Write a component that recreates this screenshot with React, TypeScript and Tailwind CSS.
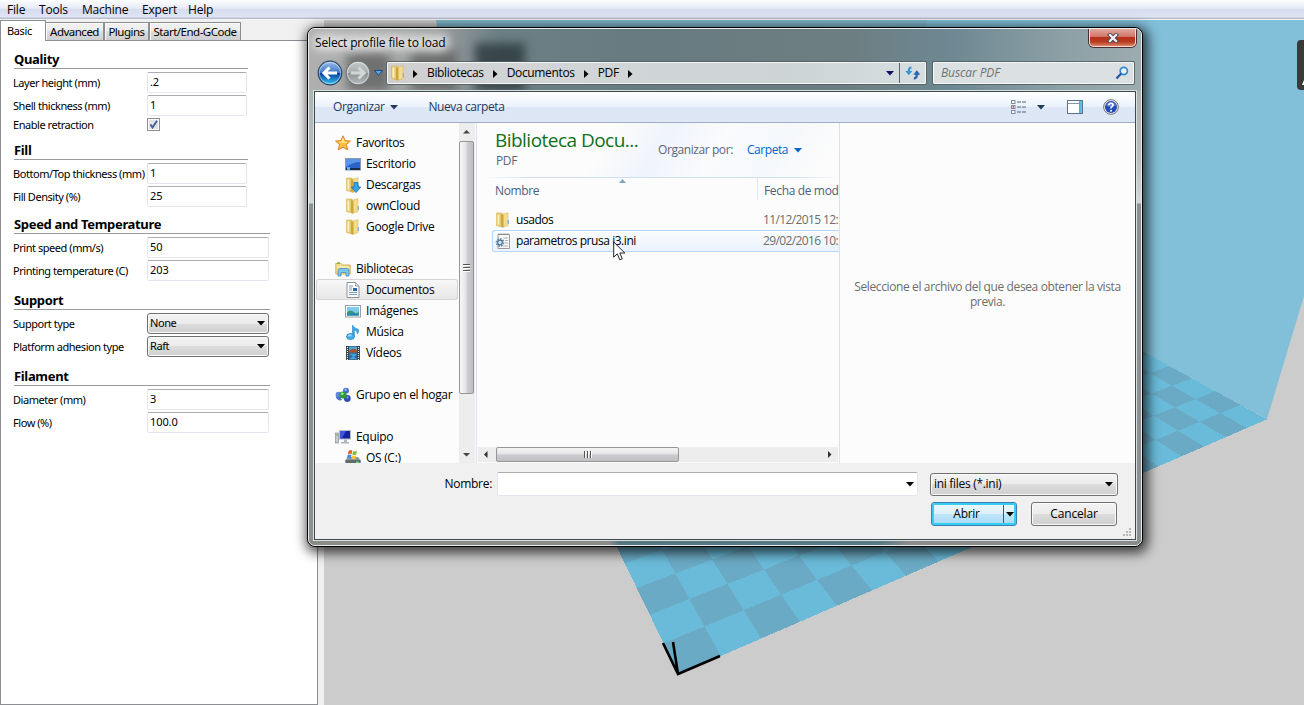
import React from "react";

const SEGOE = "font-['Open_Sans','Noto_Sans',sans-serif]";
const TAHOMA = "font-['Noto_Sans','Open_Sans',sans-serif]";

/* ---------- 3D viewport ---------- */

// Perspective projection of bed coordinates (in 10 mm cells) to the viewport.
function project(u: number, v: number): string {
  const w = 1 + 0.02352 * u + 0.0412 * v;
  const x = (678.6 + 59.22 * u + 12.3 * v) / w;
  const y = (674.3 - 2.89 * u - 4.5 * v) / w;
  return `${(x - 324).toFixed(1)},${(y - 20).toFixed(1)}`;
}

function Viewport() {
  const cells: React.ReactNode[] = [];
  for (let u = 0; u < 20; u++)
    for (let v = 0; v < 20; v++)
      if ((u + v) % 2 === 0)
        cells.push(
          <polygon
            key={`${u}-${v}`}
            points={[project(u, v), project(u + 1, v), project(u + 1, v + 1), project(u, v + 1)].join(" ")}
          />
        );
  return (
    <svg width="980" height="685" viewBox="0 0 980 685" className="block bg-[#cccccc]">
      <polygon points="112,0 603,0 603,250 150,250" fill="#7eb5c9" />
      <polygon points="603,0 980,0 980,276 943,399 800,322 603,250" fill="#82bfd8" />
      <g shapeRendering="crispEdges">
        <polygon points={[project(0, 0), project(20, 0), project(20, 20), project(0, 20)].join(" ")} fill="#6abad9" />
        <g fill="#6aaac4">{cells}</g>
      </g>
      <path d="M339 623L354 654L396 636M349 622L354 654" fill="none" stroke="#000" strokeWidth="2.6" />
      <rect x="973" y="20" width="20" height="50" rx="4" fill="#3a3a3a" />
      <path d="M978 65L980 60V65Z" fill="#fff" />
    </svg>
  );
}

/* ---------- settings panel ---------- */

function Arrow({ className = "" }: { className?: string }) {
  return (
    <svg width="8" height="5" viewBox="0 0 8 5" className={`shrink-0 ${className}`}>
      <path d="M0 0H8L4 4.5Z" fill="currentColor" />
    </svg>
  );
}

function Section({ title, wide, className = "", children }: { title: string; wide?: boolean; className?: string; children: React.ReactNode }) {
  return (
    <section className={className}>
      <h2
        className={`mb-[3px] flex h-[18px] items-center border-b border-[#9a9a9a] pb-px text-[13px] font-bold leading-none tracking-[-0.33px] ${wide ? "w-[256px]" : "w-[234px]"}`}
      >
        {title}
      </h2>
      {children}
    </section>
  );
}

function Field({ label, value, wide, select }: { label: string; value: string; wide?: boolean; select?: boolean }) {
  return (
    <div className="mb-[2px] flex h-[21px] items-center">
      <span className="ml-[-1px] w-[134px] shrink-0 whitespace-nowrap pt-px text-[11px] tracking-[-0.45px]">{label}</span>
      {select ? (
        <span className="flex h-[21px] w-[122px] items-center justify-between rounded-[3px] border border-[#707070] bg-[linear-gradient(#f3f3f3_0%,#ebebeb_50%,#dddddd_50%,#cfcfcf_100%)] px-[3px] pl-[2px] text-[11px] tracking-[-0.4px] shadow-[inset_0_0_0_1px_#fafafa]">
          {value}
          <Arrow />
        </span>
      ) : (
        <span
          className={`flex h-[21px] items-center rounded-[2px] border border-[#e3e6ee] border-t-[#abadb3] bg-white pb-px pl-[2px] text-[11px] tracking-[-0.1px] ${wide ? "w-[122px]" : "w-[100px]"}`}
        >
          {value}
        </span>
      )}
    </div>
  );
}

function Tab({ label, width }: { label: string; width: string }) {
  return (
    <div
      className={`flex h-[18px] items-center justify-center whitespace-nowrap border border-b-0 border-[#8c8e94] bg-[linear-gradient(#f2f2f2_0%,#ebebeb_50%,#dddddd_50%,#cfcfcf_100%)] text-[11.5px] tracking-[-0.5px] shadow-[inset_1px_1px_0_#fafafa] ${width}`}
    >
      {label}
    </div>
  );
}

function Settings() {
  return (
    <aside className={`flex h-[685px] w-[318px] shrink-0 flex-col bg-[#f0f0f0] text-black ${TAHOMA}`}>
      <div className="flex h-[20px] items-end">
        <div className="z-10 flex h-[21px] w-[46px] shrink-0 items-center self-start border border-b-0 border-[#8c8e94] bg-white pl-[6px] text-[11px] tracking-[-0.35px]">
          Basic
        </div>
        <Tab label="Advanced" width="w-[58px] border-l-0" />
        <Tab label="Plugins" width="w-[45px]" />
        <Tab label="Start/End-GCode" width="w-[92px]" />
      </div>
      <div className="flex-1 border border-[#8c8e94] bg-white pl-[13px] pt-[10px]">
        <Section title="Quality">
          <Field label="Layer height (mm)" value=".2" />
          <Field label="Shell thickness (mm)" value="1" />
          <div className="flex h-[13px] items-center text-[11px] tracking-[-0.45px]">
            <span className="ml-[-1px] w-[134px] pt-px">Enable retraction</span>
            <svg width="13" height="13" viewBox="0 0 13 13">
              <rect x=".5" y=".5" width="12" height="12" fill="#fff" stroke="#8e8f8f" />
              <rect x="2" y="2" width="9" height="9" fill="#dfe2e8" />
              <path d="M3.5 6.5L5.5 9.5L10 2.8" fill="none" stroke="#4b5f97" strokeWidth="2" />
            </svg>
          </div>
        </Section>
        <Section title="Fill" className="mt-[11px]">
          <Field label="Bottom/Top thickness (mm)" value="1" />
          <Field label="Fill Density (%)" value="25" />
        </Section>
        <Section title="Speed and Temperature" wide className="mt-[9px]">
          <Field label="Print speed (mm/s)" value="50" wide />
          <Field label="Printing temperature (C)" value="203" wide />
        </Section>
        <Section title="Support" wide className="mt-[11px]">
          <Field label="Support type" value="None" select />
          <Field label="Platform adhesion type" value="Raft" select />
        </Section>
        <Section title="Filament" wide className="mt-[11px]">
          <Field label="Diameter (mm)" value="3" wide />
          <Field label="Flow (%)" value="100.0" wide />
        </Section>
      </div>
    </aside>
  );
}

/* ---------- icons ---------- */

function Svg({ children, w = 16, h = 16 }: { children: React.ReactNode; w?: number; h?: number }) {
  return (
    <svg width={w} height={h} viewBox={`0 0 ${w} ${h}`} className="shrink-0">
      {children}
    </svg>
  );
}

const folderShape = (
  <>
    <path d="M1.5 1H7V15L1.5 13.5Z" fill="#e6ca6e" stroke="#d3b356" strokeWidth=".6" />
    <path d="M7 2.2L13 .7V13.6L7 15.5Z" fill="#f3dd8c" stroke="#d6b95f" strokeWidth=".6" />
    <path d="M6 2.5H8.5V15.5L6 14.5Z" fill="#cda63d" />
    <path d="M2.5 2.5H4.3V13L2.5 12.5Z" fill="#fbf1bf" />
    <path d="M13.3 8V12" stroke="#6fb5d8" strokeWidth="1.2" />
  </>
);

const FolderIcon = () => <Svg>{folderShape}</Svg>;

const DownloadsIcon = () => (
  <Svg>
    {folderShape}
    <path d="M9 5.5H13V10H15.8L11 15.6L6.3 10H9Z" fill="#35a4e8" stroke="#1c6fb5" strokeWidth=".8" />
  </Svg>
);

const StarIcon = () => (
  <Svg>
    <path d="M8 .8L10.1 5.6L15.4 6.1L11.4 9.6L12.7 14.9L8 12.1L3.3 14.9L4.6 9.6L.6 6.1L5.9 5.6Z" fill="#fbbf3c" stroke="#e07f2a" strokeWidth="1" />
    <path d="M8 2.6L9.4 6.4L13 7L9 8L5 7.6L3.2 6.9L6.5 6.4Z" fill="#ffe68a" />
  </Svg>
);

const DesktopIcon = () => (
  <Svg>
    <rect x=".5" y="2.5" width="15" height="11.5" fill="#2a62c9" stroke="#8a98a8" />
    <path d="M1 3H15V6Q8 6 1 11Z" fill="#5a95ea" />
    <rect x="1" y="12" width="14" height="2" fill="#1a2b4a" />
    <rect x="2" y="11.2" width="3" height="2.6" fill="#5bc4f0" />
  </Svg>
);

const LibraryIcon = () => (
  <Svg>
    <path d="M.8 2.5H6L7.5 4H15.2V13H.8Z" fill="#f2dd8d" stroke="#cdae55" strokeWidth=".9" />
    <path d="M2 2H5" stroke="#62b54c" strokeWidth="1.4" />
    <path d="M2.5 6H13.5" stroke="#fbf3cb" strokeWidth="1.2" />
    <path d="M3 15V10Q3 7.5 5 7.5H12Q14 7.5 14 10V15H11V11.5H6V15Z" fill="#7cc6ee" stroke="#4191c4" strokeWidth=".8" />
  </Svg>
);

const DocIcon = () => (
  <Svg>
    <path d="M2 .5H10.5L14 4V15.5H2Z" fill="#fff" stroke="#8b9199" />
    <path d="M10.5 .5V4H14" fill="#dfe6ee" stroke="#8b9199" strokeWidth=".8" />
    <path d="M4 4H8M4 6H7M4 8H7M4 10.5H12M4 12.5H12" stroke="#6f8fb8" strokeWidth=".9" />
    <rect x="8" y="6" width="4" height="3" fill="#2f66a6" />
  </Svg>
);

const PictureIcon = () => (
  <Svg>
    <rect x=".5" y="2.5" width="15" height="11.5" fill="#fff" stroke="#9a9fa5" />
    <rect x="2" y="4" width="12" height="8.5" fill="#7ecbf2" />
    <path d="M2 9Q6 6 9 9T14 8V12.5H2Z" fill="#3c9a6a" />
    <path d="M2 11Q8 9 14 11V12.5H2Z" fill="#2a86bb" />
  </Svg>
);

const MusicIcon = () => (
  <Svg>
    <path d="M7.5 12V1Q9 4 13.5 5.5Q14 8 12.5 10Q12.5 6.5 9.3 6V12.5" fill="#3ba5e2" stroke="#2384c4" strokeWidth=".6" />
    <ellipse cx="5.5" cy="12.5" rx="4" ry="3" fill="#43aeea" stroke="#1e7dbd" strokeWidth=".7" />
    <ellipse cx="4.8" cy="11.5" rx="1.8" ry="1" fill="#a9ddfa" />
  </Svg>
);

const VideoIcon = () => (
  <Svg>
    <rect x="1" y="1" width="14" height="14" fill="#2e4148" />
    <rect x="4" y="1.5" width="8" height="6" fill="#4ea6dd" />
    <rect x="4" y="8.5" width="8" height="6" fill="#46a3e0" />
    <path d="M4 6Q7 2 12 5V7.5H4Z" fill="#a8552f" />
    <path d="M4 9L8 11L4 14.5ZM12 9L9 12L12 14Z" fill="#2c6b9b" />
    <path d="M2.5 2V15M13.5 2V15" stroke="#f2f2f2" strokeWidth="1.2" strokeDasharray="1 1" />
  </Svg>
);

const HomegroupIcon = () => (
  <Svg>
    <circle cx="3.8" cy="8" r="3.2" fill="#5f87dd" />
    <circle cx="11" cy="3.8" r="3" fill="#4b74d0" />
    <circle cx="12.3" cy="11.5" r="3.4" fill="#2f4fb5" />
    <path d="M.8 10Q3 14.5 7 13L5 10Z" fill="#4a6fd0" />
    <circle cx="8" cy="8" r="3.6" fill="#2f9a38" />
    <circle cx="7.2" cy="6.8" r="1.4" fill="#a5e39a" />
    <circle cx="10.6" cy="2.8" r="1" fill="#b7c9f5" />
    <circle cx="12.5" cy="10.4" r="1" fill="#8fa9ec" />
  </Svg>
);

const ComputerIcon = () => (
  <Svg>
    <rect x=".5" y="4" width="3" height="10" fill="#c6ccd2" stroke="#8a9299" strokeWidth=".7" />
    <path d="M1 6H3" stroke="#55b855" strokeWidth="1" />
    <rect x="4.5" y="1.5" width="11" height="8.5" fill="#1420a6" stroke="#b6bec6" />
    <path d="M5 2H11L7 9H5Z" fill="#4157da" />
    <path d="M9 10.5H12V13H14V14.5H6V13H9Z" fill="#aeb6bd" />
  </Svg>
);

const DriveIcon = () => (
  <Svg>
    <path d="M.5 10L3 7H13L15.5 10V15H.5Z" fill="#8d979e" />
    <rect x=".5" y="10" width="15" height="5" fill="#5d6a70" />
    <rect x="11" y="11.5" width="3" height="1.6" fill="#58dd6a" />
    <path d="M3.5 .9Q5.5 -.6 7.3 .6L6.6 4.2Q4.8 3.2 2.8 4.4Z" fill="#e8632c" />
    <path d="M8 .9Q10 2 12 .8L11.3 4.4Q9.3 5.4 7.3 4.4Z" fill="#7fbf3f" />
    <path d="M2.6 5.1Q4.6 4 6.5 5L5.8 8.4Q4 7.4 2 8.6Z" fill="#3b8fe0" />
    <path d="M7.2 5.2Q9 6.3 11.1 5.2L10.4 8.7Q8.4 9.8 6.5 8.6Z" fill="#f7c52e" />
  </Svg>
);

const IniIcon = () => (
  <Svg>
    <path d="M3 1.5H14.5V15.5H3Z" fill="#f8f8f8" stroke="#9b9b9b" />
    <path d="M3.5 1.2H14" stroke="#777" strokeWidth="1.4" strokeDasharray="1 1" />
    <path d="M8.5 5H13M10 7.5H13M10 10H13M8 13H13" stroke="#a5a5a5" strokeWidth=".9" />
    <circle cx="5" cy="9.5" r="3.4" fill="none" stroke="#6e8fac" strokeWidth="2" strokeDasharray="1.6 1" />
    <circle cx="5" cy="9.5" r="2.3" fill="#d9e6f0" stroke="#4d7599" strokeWidth="1.2" />
  </Svg>
);

/* ---------- dialog ---------- */

function NavOrb({ active }: { active?: boolean }) {
  const id = active ? "orbOn" : "orbOff";
  return (
    <svg width="26" height="26" viewBox="0 0 26 26" className="shrink-0">
      <defs>
        <linearGradient id={id} x1="0" y1="0" x2="0" y2="1">
          <stop offset="0" stopColor={active ? "#9cc0ea" : "#c4c8c9"} />
          <stop offset=".48" stopColor={active ? "#3c78cb" : "#a9aeaf"} />
          <stop offset=".52" stopColor={active ? "#0a3f9d" : "#8e9495"} />
          <stop offset="1" stopColor={active ? "#35c8f5" : "#b5babb"} />
        </linearGradient>
      </defs>
      <circle cx="13" cy="13" r="11.8" fill={`url(#${id})`} stroke={active ? "#2b4766" : "#74797b"} strokeWidth="1.2" />
      <circle cx="13" cy="13" r="10.7" fill="none" stroke="#fff" strokeOpacity=".5" />
      <path
        d={active ? "M20 13H7.5M12.5 7.5L7 13L12.5 18.5" : "M6 13H18.5M13.5 7.5L19 13L13.5 18.5"}
        fill="none"
        stroke={active ? "#fff" : "#d3d6d7"}
        strokeWidth="3"
      />
    </svg>
  );
}

function Crumb({ label }: { label?: string }) {
  return (
    <>
      {label && <span>{label}</span>}
      <svg width="5" height="8" viewBox="0 0 5 8" className="mt-px shrink-0">
        <path d="M0 0L4.5 4L0 8Z" fill="#000" />
      </svg>
    </>
  );
}

function TitleBar() {
  return (
    <div className="flex h-[33px] items-start justify-between pl-[2px]">
      <span className="pt-[5px] text-[12px] leading-[17px] tracking-[-0.15px] text-black [text-shadow:0_0_8px_#fff,0_0_10px_#fff,0_0_12px_#ffffffcc]">
        Select profile file to load
      </span>
      <button className="mr-px flex h-[18px] w-[47px] items-center justify-center rounded-b-[5px] border border-t-0 border-[#f0dcd8] bg-[linear-gradient(#e2a99e_0%,#cf7566_45%,#b8311a_50%,#b83a20_75%,#dd8264_100%)] shadow-[0_0_0_1px_#4c3030]">
        <svg width="12" height="10" viewBox="0 0 12 10">
          <path d="M3 2L9 8M9 2L3 8" stroke="#54495c" strokeWidth="4.2" strokeLinecap="square" />
          <path d="M3 2L9 8M9 2L3 8" stroke="#f4f4f4" strokeWidth="2.2" strokeLinecap="square" />
        </svg>
      </button>
    </div>
  );
}

function NavBar() {
  return (
    <div className="flex h-[22px] items-center pl-[4px]">
      <NavOrb active />
      <span className="w-[2px]" />
      <NavOrb />
      <svg width="9" height="6" viewBox="0 0 9 6" className="ml-[3px] mr-[4px] shrink-0">
        <path d="M.5 .5H8.5L4.5 5.3Z" fill="#58a8e6" stroke="#173f78" strokeWidth=".9" />
      </svg>
      <div className="flex h-[22px] w-[539px] shrink-0 items-center rounded-[1px] border border-[#f4f6f6] bg-[linear-gradient(90deg,#d0cfd0_0%,#d2d5d6_30%,#cdd4d6_75%,#d6dedf_100%)] text-[12px] tracking-[-0.35px] text-black shadow-[0_0_0_1px_#4f5b5ecc]">
        <div className="flex flex-1 items-center gap-[9px] pl-[2px]">
          <span className="mr-[-2px] flex">
            <FolderIcon />
          </span>
          <Crumb />
          <Crumb label="Bibliotecas" />
          <Crumb label="Documentos" />
          <Crumb label="PDF" />
        </div>
        <Arrow className="mr-[5px] text-[#0b1060]" />
        <div className="flex h-full w-[26px] items-center justify-center border-l border-[#5b676b]">
          <svg width="16" height="14" viewBox="0 0 16 14">
            <path d="M6.5 1.5Q3.8 1.5 3.8 5V6" fill="none" stroke="#3397dc" strokeWidth="2.2" />
            <path d="M.3 5H7.3L3.8 9.3Z" fill="#3397dc" />
            <path d="M8.8 12.5Q11.8 12.5 11.8 9V8" fill="none" stroke="#2a62b5" strokeWidth="2.2" />
            <path d="M8.3 8.7H15.3L11.8 4.3Z" fill="#2a62b5" />
          </svg>
        </div>
      </div>
      <div className="ml-[7px] flex h-[22px] w-[201px] items-center justify-between rounded-[1px] border border-[#f4f6f6] bg-[#dbe1e2] pl-[7px] pr-[4px] text-[12px] italic tracking-[-0.1px] text-[#6d7375] shadow-[0_0_0_1px_#4f5b5ecc]">
        Buscar PDF
        <svg width="14" height="14" viewBox="0 0 14 14">
          <circle cx="8.8" cy="5" r="3.6" fill="#e8f3fa" stroke="#3389cd" strokeWidth="1.7" />
          <path d="M6.2 7.6L1.5 12.5" stroke="#23549b" strokeWidth="2.2" />
        </svg>
      </div>
    </div>
  );
}

function Toolbar() {
  return (
    <div className="flex h-[31px] shrink-0 items-center border-b border-[#a0afc9] bg-[linear-gradient(#ffffff_0%,#eaf1fb_50%,#dce6f4_51%,#dde7f6_100%)] pl-[18px] pr-[16px] text-[12px] tracking-[-0.4px] text-[#1e395b]">
      <span>Organizar</span>
      <Arrow className="ml-[6px]" />
      <span className="ml-[30px] flex-1">Nueva carpeta</span>
      <svg width="16" height="14" viewBox="0 0 16 14">
        {[0, 5, 10].map((y) => (
          <g key={y}>
            <rect x=".5" y={y + 0.5} width="3.5" height="3" fill="#fff" stroke="#7e8b9c" />
            <path d={`M6 ${y + 2}H10M11 ${y + 2}H15`} stroke="#52647a" strokeWidth="1" />
          </g>
        ))}
        <rect x="1.5" y="6.3" width="1.5" height="1.4" fill="#c33" />
      </svg>
      <Arrow className="ml-[10px] mr-[22px]" />
      <svg width="16" height="14" viewBox="0 0 16 14">
        <rect x=".5" y=".5" width="15" height="13" fill="#fff" stroke="#5d728c" />
        <path d="M1 3.5H12" stroke="#8595a8" />
        <rect x="13" y="1" width="2" height="12" fill="#59c4e4" />
        <path d="M12.6 1V13" stroke="#5d728c" strokeWidth=".8" />
      </svg>
      <svg width="16" height="16" viewBox="0 0 16 16" className="ml-[20px]">
        <circle cx="8" cy="8" r="7.4" fill="#e6e6ea" stroke="#7a7a80" strokeWidth="1" />
        <circle cx="8" cy="8" r="6" fill="#2449b8" />
        <path d="M3 6.5A5.3 5.3 0 0 1 13 6.5Q8 9 3 6.5Z" fill="#5f82d8" />
        <path d="M6 6.2Q6 4.2 8 4.2T10 6Q10 7 8.8 7.7Q8 8.2 8 9.4" fill="none" stroke="#fff" strokeWidth="1.6" />
        <circle cx="8" cy="11.7" r="1" fill="#fff" />
      </svg>
    </div>
  );
}

type NavItem = { label: string; icon: React.ReactNode; root?: boolean; selected?: boolean } | null;

const NAV: NavItem[] = [
  { label: "Favoritos", icon: <StarIcon />, root: true },
  { label: "Escritorio", icon: <DesktopIcon /> },
  { label: "Descargas", icon: <DownloadsIcon /> },
  { label: "ownCloud", icon: <FolderIcon /> },
  { label: "Google Drive", icon: <FolderIcon /> },
  null,
  { label: "Bibliotecas", icon: <LibraryIcon />, root: true },
  { label: "Documentos", icon: <DocIcon />, selected: true },
  { label: "Imágenes", icon: <PictureIcon /> },
  { label: "Música", icon: <MusicIcon /> },
  { label: "Vídeos", icon: <VideoIcon /> },
  null,
  { label: "Grupo en el hogar", icon: <HomegroupIcon />, root: true },
  null,
  { label: "Equipo", icon: <ComputerIcon />, root: true },
  { label: "OS (C:)", icon: <DriveIcon /> },
];

function Sidebar() {
  return (
    <nav className="w-[144px] shrink-0 overflow-hidden pt-[9px] text-[12px] tracking-[-0.3px] text-black">
      {NAV.map((item, i) =>
        item ? (
          <div
            key={i}
            className={`ml-px flex h-[21px] w-[142px] items-center gap-[5px] whitespace-nowrap ${item.root ? "pl-[19px]" : "pl-[29px]"} ${
              item.selected ? "rounded-[3px] bg-[linear-gradient(#f8f8f8,#e6e6e6)] shadow-[inset_0_0_0_1px_#d5d5d5]" : ""
            }`}
          >
            {item.icon}
            <span>{item.label}</span>
          </div>
        ) : (
          <div key={i} className="h-[21px]" />
        )
      )}
    </nav>
  );
}

function VerticalScroll() {
  return (
    <div className="flex w-[16px] shrink-0 flex-col items-start bg-[#ededed]">
      <svg width="16" height="18" viewBox="0 0 16 18" className="shrink-0">
        <path d="M4 10.5H11L7.5 7Z" fill="#444" />
      </svg>
      <div className="flex h-[253px] w-[15px] shrink-0 flex-col items-center justify-center gap-px rounded-[2px] border border-[#979797] bg-[linear-gradient(90deg,#f7f7f7_0%,#e6e6e8_45%,#cfcfd3_55%,#bdbdc2_100%)]">
        <i className="h-[2px] w-[7px] border-b border-white bg-[#555]" />
        <i className="h-[2px] w-[7px] border-b border-white bg-[#555]" />
        <i className="h-[2px] w-[7px] border-b border-white bg-[#555]" />
      </div>
      <span className="flex-1" />
      <svg width="16" height="17" viewBox="0 0 16 17" className="shrink-0">
        <path d="M4 7H11L7.5 10.5Z" fill="#444" />
      </svg>
    </div>
  );
}

function HorizontalScroll() {
  return (
    <div className="mx-px mb-px flex h-[15px] shrink-0 items-center bg-[#ededed]">
      <svg width="18" height="15" viewBox="0 0 18 15" className="shrink-0">
        <path d="M9.5 4V11L6 7.5Z" fill="#333" />
      </svg>
      <div className="flex h-[15px] w-[183px] shrink-0 items-center justify-center gap-px rounded-[2px] border border-[#979797] bg-[linear-gradient(#f5f5f5_0%,#e4e4e6_45%,#cbcbcf_55%,#c0c0c4_100%)]">
        <i className="h-[7px] w-[2px] border-r border-white bg-[#555]" />
        <i className="h-[7px] w-[2px] border-r border-white bg-[#555]" />
        <i className="h-[7px] w-[2px] border-r border-white bg-[#555]" />
      </div>
      <span className="flex-1" />
      <svg width="18" height="15" viewBox="0 0 18 15" className="shrink-0">
        <path d="M8 4V11L11.5 7.5Z" fill="#333" />
      </svg>
    </div>
  );
}

function FileRow({ icon, name, date, hot }: { icon: React.ReactNode; name: string; date: string; hot?: boolean }) {
  return (
    <div
      className={`ml-[15px] flex h-[22px] items-center overflow-hidden whitespace-nowrap text-[12px] tracking-[-0.45px] ${
        hot
          ? "rounded-l-[3px] bg-[linear-gradient(#fbfcfe,#eaf2fc)] shadow-[inset_1px_1px_0_#b8d6fb,inset_0_-1px_0_#b8d6fb]"
          : "mb-[-1px]"
      }`}
    >
      <span className="flex w-[271px] shrink-0 items-center gap-[5px] pl-[3px] text-black">
        {icon}
        <span>{name}</span>
      </span>
      <span className="tracking-[-0.62px] text-[#6d6d6d]">{date}</span>
    </div>
  );
}

function FileList() {
  return (
    <div className="flex w-[364px] shrink-0 flex-col overflow-hidden border-x border-[#d3e3f3] bg-[#fcfcfc]">
      <div className="flex h-[54px] shrink-0 bg-[linear-gradient(120deg,#fcfcfc_0%,#fcfcfc_35%,#f0f4fb_50%,#fafbfd_65%,#f5f8fc_80%,#fcfcfc_95%)]">
        <div className="w-[163px] shrink-0 pl-[18px] pt-[5px]">
          <h1 className="whitespace-nowrap text-[19px] leading-[25px] tracking-[-0.53px] text-[#0f7019]">Biblioteca Docu...</h1>
          <p className="pl-px text-[12px] leading-[15px] tracking-[-0.4px] text-[#5a6779]">PDF</p>
        </div>
        <div className="flex h-[54px] items-center whitespace-nowrap pl-[18px] text-[12px] tracking-[-0.42px] text-[#5a6779]">
          Organizar por:
          <span className="ml-[14px] text-[#0066cc]">Carpeta</span>
          <Arrow className="ml-[6px] text-[#0066cc]" />
        </div>
      </div>
      <div className="ml-[8px] h-px shrink-0 bg-[linear-gradient(90deg,#fcfcfc,#d0dff0_12%,#d0dff0_88%,#fcfcfc)]" />
      <div className="flex h-[31px] shrink-0 pl-[18px] text-[12px] leading-[26px] tracking-[-0.35px] text-[#4c607a]">
        <span className="flex h-[22px] w-[263px] shrink-0 border-r border-[#dfe7f2]">
          <span className="w-[124px]">Nombre</span>
          <svg width="7" height="4" viewBox="0 0 7 4" className="mt-[1px]">
            <path d="M0 4H7L3.5 0Z" fill="#7aa4c4" />
          </svg>
        </span>
        <span className="whitespace-nowrap pl-[6px]">Fecha de mod</span>
      </div>
      <FileRow icon={<FolderIcon />} name="usados" date="11/12/2015 12:" />
      <FileRow icon={<IniIcon />} name="parametros prusa i3.ini" date="29/02/2016 10:" hot />
      <span className="flex-1" />
      <HorizontalScroll />
    </div>
  );
}

function Footer() {
  return (
    <div className="flex flex-1 flex-col bg-[#f0f0f0] pt-[9px] text-[12px] tracking-[-0.3px] text-black">
      <div className="flex h-[24px] items-center">
        <span className="w-[182px] pr-[5px] text-right">Nombre:</span>
        <div className="flex h-[24px] w-[421px] items-center justify-end rounded-[2px] border border-[#e3e6ee] border-t-[#abadb3] bg-white pr-[3px]">
          <Arrow />
        </div>
        <div className="ml-[12px] flex h-[23px] w-[188px] items-center justify-between rounded-[3px] border border-[#707070] bg-[linear-gradient(#f3f3f3_0%,#ebebeb_50%,#dddddd_50%,#cfcfcf_100%)] pl-[3px] pr-[4px] tracking-[-0.3px] shadow-[inset_0_0_0_1px_#fafafa]">
          ini files (*.ini)
          <Arrow />
        </div>
      </div>
      <div className="mt-[6px] flex h-[24px] pl-[616px]">
        <div className="flex h-[24px] w-[86px] rounded-[3px] border border-[#3c7fb1] bg-[linear-gradient(#edf7fd_0%,#dcf0fb_50%,#bfe6fa_50%,#a9dbf5_100%)] shadow-[inset_0_0_0_2px_#35ccf5]">
          <span className="flex w-[71px] items-center justify-center pr-[2px]">Abrir</span>
          <span className="my-[2px] w-px bg-[#555]" />
          <span className="flex flex-1 items-center pl-[2px]">
            <Arrow />
          </span>
        </div>
        <div className="ml-[14px] flex h-[24px] w-[86px] items-center justify-center rounded-[3px] border border-[#707070] bg-[linear-gradient(#f3f3f3_0%,#ebebeb_50%,#dddddd_50%,#cfcfcf_100%)] tracking-[-0.15px] shadow-[inset_0_0_0_1px_#fafafa]">
          Cancelar
        </div>
      </div>
      <div className="flex flex-1 items-end justify-end pb-[2px] pr-[3px]">
        <svg width="9" height="9" viewBox="0 0 9 9" fill="#b8b8b8">
          <path d="M6 0H8V2H6ZM3 3H5V5H3ZM6 3H8V5H6ZM0 6H2V8H0ZM3 6H5V8H3ZM6 6H8V8H6Z" />
        </svg>
      </div>
    </div>
  );
}

function Dialog() {
  return (
    <div
      className={`absolute left-[307px] top-[27px] h-[520px] w-[836px] rounded-[8px] border border-black bg-[#7e8b8e] shadow-[2px_3px_12px_3px_rgba(0,0,0,0.7)] ${SEGOE}`}
    >
      <div className="relative h-[518px] w-[834px] overflow-hidden rounded-[7px] border border-[#e6ecec] bg-[linear-gradient(#a4a9a9_0px,#b9bebf_130px,#d3d7d7_174px,#8b9193_175px,#8b9193_100%)]">
        <div className="absolute inset-x-0 top-0 h-[62px] bg-[linear-gradient(90deg,#b0b0b0_0px,#999b9b_130px,#6c7f85_190px,#687b80_330px,#6d7e82_540px,#6d8892_640px,#8b9fa5_750px,#9dacb0_832px)]" />
        <div className="absolute left-[38px] top-[22px] h-[40px] w-[42px] bg-[#4d4d4d99] blur-[5px]" />
        <div className="absolute left-[102px] top-[22px] h-[40px] w-[46px] bg-[#4d4d4d99] blur-[5px]" />
        <div className="absolute left-[166px] top-[14px] h-[48px] w-[50px] bg-[#2c383ccc] blur-[5px]" />
        <div className="absolute left-[4px] top-[4px] h-[18px] w-[136px] rounded-full bg-[#e0e0e0aa] blur-[6px]" />
        <div className="absolute bottom-0 left-0 h-[6px] w-full bg-[linear-gradient(90deg,#8b8b88_300px,#567680_310px,#587a84_570px,#8a8b8b_600px)]" />
        <div className="relative px-[4px]">
          <TitleBar />
          <NavBar />
        </div>
        <div className="relative ml-[5px] mt-[7px] flex h-[449px] w-[822px] flex-col border border-[#3d4a4d] bg-[#fcfcfc] shadow-[0_0_0_1px_#d9e0e1]">
          <Toolbar />
          <div className="flex h-[340px] shrink-0">
            <Sidebar />
            <VerticalScroll />
            <span className="w-px" />
            <FileList />
            <div className="flex flex-1 items-center justify-center pb-px text-center text-[12px] leading-[15px] tracking-[-0.38px] text-[#6d6d6d]">
              <p className="whitespace-nowrap pt-[2px]">
                Seleccione el archivo del que desea obtener la vista
                <br />
                previa.
              </p>
            </div>
          </div>
          <Footer />
        </div>
      </div>
    </div>
  );
}

export default function App() {
  return (
    <div className="relative h-[705px] w-[1304px] overflow-hidden bg-[#f0f0f0]">
      <header
        className={`flex h-[20px] items-center whitespace-nowrap border-b border-[#f4f4f6] bg-[linear-gradient(#fdfdfe_0%,#e6eaf6_45%,#d5dcef_50%,#e1e5f5_90%,#b6bccc_95%)] pl-[7px] text-[12px] tracking-[-0.2px] text-black ${SEGOE}`}
      >
        <span className="w-[32px]">File</span>
        <span className="w-[43px]">Tools</span>
        <span className="w-[60px]">Machine</span>
        <span className="w-[46px]">Expert</span>
        <span>Help</span>
      </header>
      <main className="flex">
        <Settings />
        <div className="w-[6px] shrink-0" />
        <Viewport />
      </main>
      <Dialog />
      <svg width="13" height="20" viewBox="0 0 13 20" className="absolute left-[613px] top-[241px]">
        <path d="M.7 1V16.2L4.3 12.8L6.8 18.8L9.3 17.8L6.8 12H11.8Z" fill="#fff" stroke="#222" />
      </svg>
    </div>
  );
}
